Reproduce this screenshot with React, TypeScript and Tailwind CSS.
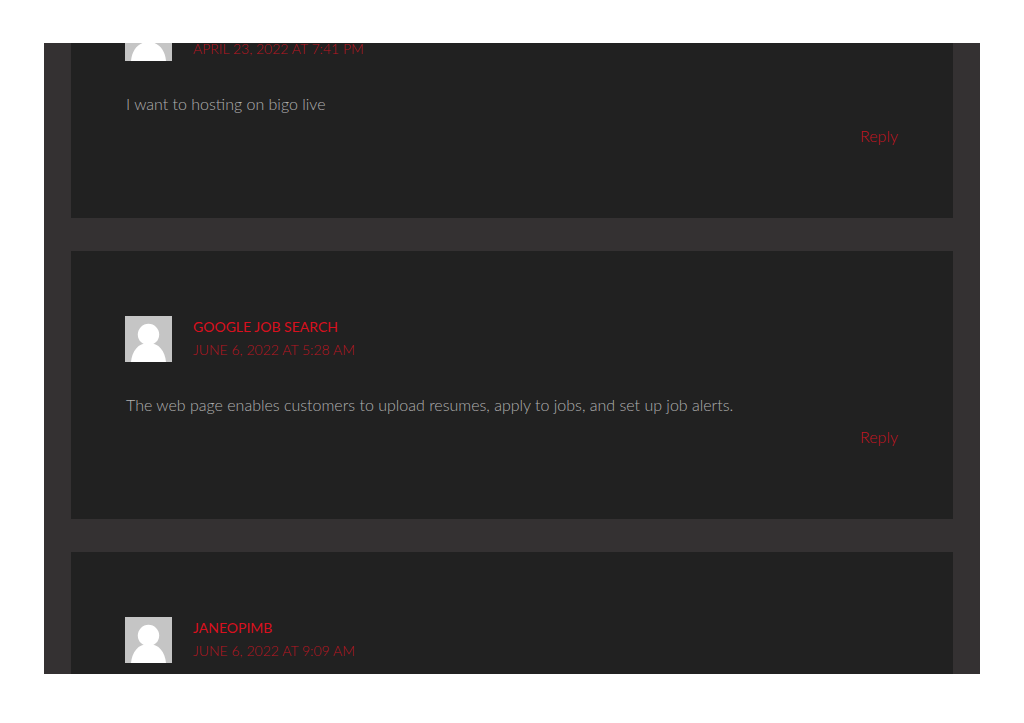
import React from 'react';

type Comment = {
  author?: string;
  date: string;
  text?: string;
};

const comments: Comment[] = [
  { date: 'April 23, 2022 at 7:41 pm', text: 'I want to hosting on bigo live' },
  {
    author: 'Google Job Search',
    date: 'June 6, 2022 at 5:28 am',
    text: 'The web page enables customers to upload resumes, apply to jobs, and set up job alerts.',
  },
  { author: 'JaneOpimb', date: 'June 6, 2022 at 9:09 am' },
];

// Default avatar silhouette
const Avatar: React.FC = () => (
  <svg viewBox="0 0 47 46" className="h-[46px] w-[47px] shrink-0 bg-[#c5c5c5]" aria-hidden="true">
    <circle cx="23.5" cy="18.5" r="10.7" fill="#fff" />
    <path d="M6 46C7 35 13 27 23.5 27S40 35 41 46Z" fill="#fff" />
  </svg>
);

const CommentCard: React.FC<{ comment: Comment }> = ({ comment }) => (
  <article className="bg-[#212121] px-[54px] pt-[65px] pb-[66px]">
    <header className="flex gap-[21px]">
      <Avatar />
      <div className="text-sm uppercase">
        <h3 className="min-h-[22px] leading-[22px] font-normal text-[#d9101e]">{comment.author}</h3>
        <a href="#" className="block leading-6 font-light text-[#b81622]">{comment.date}</a>
      </div>
    </header>
    {comment.text && (
      <div className="mt-[27px] px-px text-base leading-8">
        <p className="text-[#b0b0b0]">{comment.text}</p>
        <div className="text-right">
          <a href="#" className="text-[#c41521]">Reply</a>
        </div>
      </div>
    )}
  </article>
);

export default function App() {
  return (
    <div className="flex h-screen flex-col bg-white px-11 pt-[43px] pb-[49px] font-['Lato','Open_Sans',sans-serif] font-light">
      <main className="min-h-0 flex-1 overflow-hidden bg-[#343132] px-[27px]">
        {/* The thread is scrolled part of the way past the first comment */}
        <div className="-mt-[93px] flex flex-col gap-[33px]">
          {comments.map((comment) => (
            <CommentCard key={comment.date} comment={comment} />
          ))}
        </div>
      </main>
    </div>
  );
}
